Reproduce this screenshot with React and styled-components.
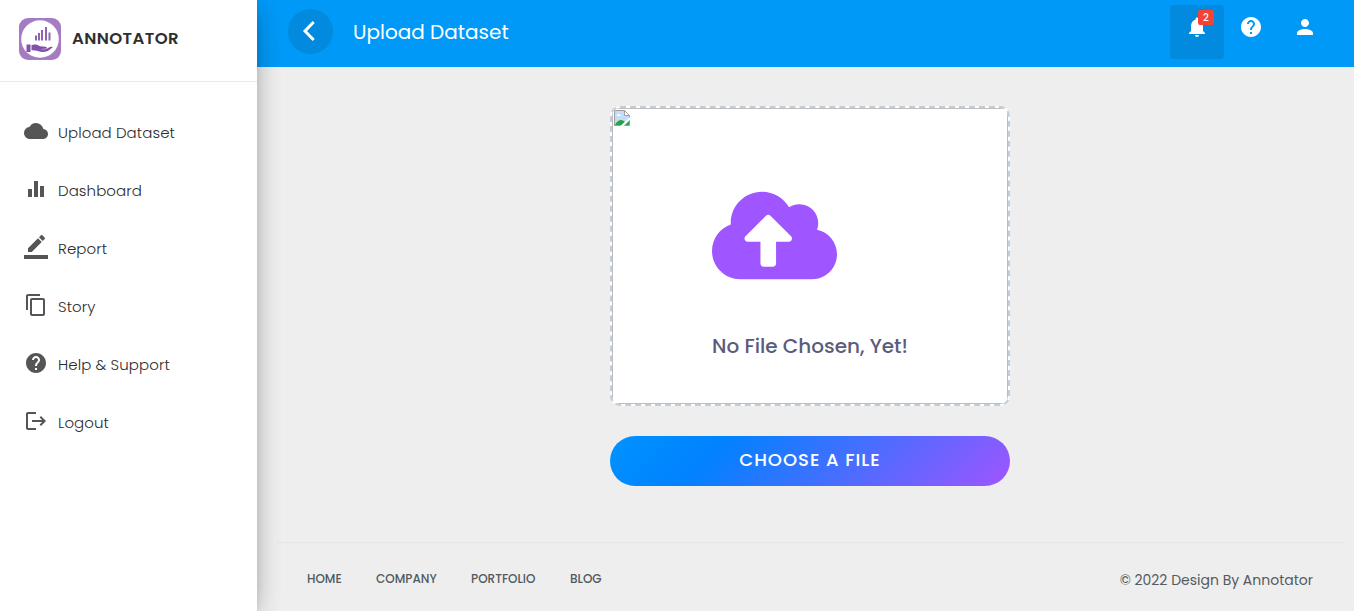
import React from "react";
import styled, { createGlobalStyle } from "styled-components";
import {
  MdCloud,
  MdEqualizer,
  MdContentCopy,
  MdHelp,
  MdLogout,
  MdNotifications,
  MdPerson,
} from "react-icons/md";

const GlobalStyle = createGlobalStyle`
  *, *::before, *::after { box-sizing: border-box; }
  body {
    margin: 0;
    overflow: hidden;
    background: #eee;
    color: #3c4858;
    font-family: Poppins, "Open Sans", "Noto Sans", sans-serif;
  }
  a { color: inherit; text-decoration: none; }
  button { border: 0; padding: 0; font: inherit; color: inherit; cursor: pointer; }
  svg { display: block; flex: none; }
`;

const Page = styled.div`
  display: grid;
  grid-template-columns: 257px 1fr;
  height: 100vh;
  min-height: 611px;
`;

const Sidebar = styled.aside`
  z-index: 2;
  display: flex;
  flex-direction: column;
  background: #fff;
  box-shadow: 0 10px 30px -12px rgba(0, 0, 0, 0.42), 0 4px 25px 0 rgba(0, 0, 0, 0.12),
    0 8px 10px -5px rgba(0, 0, 0, 0.2);
`;

const Brand = styled.a`
  display: flex;
  align-items: center;
  height: 82px;
  padding: 0 0 4px 18px;
  gap: 10px;
  border-bottom: 1px solid #e9e9e9;
`;

const BrandName = styled.span`
  color: #2e2e2e;
  font-size: 16.5px;
  font-weight: 600;
  line-height: 24px;
  letter-spacing: 0.4px;
`;

const Menu = styled.nav`
  display: flex;
  flex-direction: column;
  padding: 20px 0 0 24px;
`;

const MenuItem = styled.a`
  display: flex;
  align-items: center;
  gap: 10px;
  height: 58px;
  color: #555;
`;

const MenuLabel = styled.span`
  padding-top: 3px;
  color: #2c2c2c;
  font-size: 15px;
  font-weight: 300;
  line-height: 24px;
  white-space: nowrap;
  letter-spacing: 0.07px;
`;

const Main = styled.div`
  display: flex;
  flex-direction: column;
  min-width: 0;
`;

const TopBar = styled.header`
  display: flex;
  align-items: flex-start;
  height: 67px;
  padding: 5px 22px 0 31px;
  background: #0099f7;
  color: #fff;
`;

const BackButton = styled.button`
  display: flex;
  align-items: center;
  justify-content: center;
  width: 45px;
  height: 45px;
  margin-top: 4px;
  padding: 0 3px 1px 0;
  border-radius: 50%;
  background: #018ade;
`;

const Title = styled.h1`
  margin: 12px auto 0 20px;
  font-size: 20px;
  font-weight: 400;
  line-height: 30px;
`;

const ToolButton = styled.button`
  position: relative;
  display: flex;
  justify-content: center;
  width: 54px;
  height: 54px;
  padding-top: 10px;
  border-radius: 4px;
  background: ${(p) => (p.$active ? "#018ade" : "transparent")};
`;

const Badge = styled.span`
  position: absolute;
  top: 5px;
  right: 10px;
  width: 16px;
  height: 15px;
  border-radius: 2px;
  background: #f44336;
  font-size: 10px;
  font-weight: 500;
  line-height: 15px;
  text-align: center;
`;

const Content = styled.main`
  display: flex;
  flex-direction: column;
  align-items: center;
  flex: 1;
  gap: 30px;
  padding: 39px 0 0 9px;
`;

const DropZone = styled.section`
  width: 400px;
  height: 300px;
  border: 2px dashed #c2cdda;
  border-radius: 10px;
  background: #fff;
  overflow: hidden;
`;

const Preview = styled.div`
  display: flex;
  align-items: flex-start;
  height: 100%;
  padding: 1px;
  border: 1px solid #bdbdbd;
`;

const EmptyState = styled.div`
  display: flex;
  flex-direction: column;
  padding: 75px 0 0 82px;
`;

const EmptyText = styled.p`
  margin: 46px 0 0;
  color: #5b5b7b;
  font-size: 20px;
  font-weight: 500;
  line-height: 30px;
  white-space: nowrap;
`;

const ChooseButton = styled.button`
  width: 400px;
  height: 50px;
  padding-bottom: 4px;
  border-radius: 25px;
  background: linear-gradient(135deg, #0093ff 0%, #0082ff 26%, #9f55ff 100%);
  color: #fff;
  font-size: 18px;
  font-weight: 500;
  letter-spacing: 1px;
`;

const Footer = styled.footer`
  display: flex;
  align-items: center;
  justify-content: space-between;
  height: 69px;
  margin: 0 11px 0 20px;
  padding: 5px 30px 0;
  border-top: 1px solid #e5e5e5;
`;

const FooterLinks = styled.nav`
  display: flex;
  gap: 34px;
  padding-bottom: 2px;
  font-size: 12px;
  font-weight: 500;
  line-height: 18px;
  color: #4f5a5e;
`;

const FooterLink = styled.a`
  width: ${(p) => p.$width}px;
  white-space: nowrap;
`;

const Copyright = styled.p`
  margin: 2px 0 0;
  color: #555b60;
  font-size: 14px;
  line-height: 21px;
  white-space: nowrap;
`;

const ReportIcon = () => (
  <svg width="24" height="24" viewBox="0 0 24 24" fill="currentColor">
    <path d="M17.75 7L14 3.25l-10 10V17h3.75l10-10zm2.96-2.96c.39-.39.39-1.02 0-1.41L18.37.29c-.39-.39-1.02-.39-1.41 0L15 2.25 18.75 6l1.96-1.96z" />
    <path d="M0 20h24v4H0z" />
  </svg>
);

const ChevronIcon = () => (
  <svg width="24" height="24" viewBox="0 0 24 24" fill="none">
    <path
      d="M16.700 3L8 12l8.700 9"
      stroke="currentColor"
      strokeWidth="3"
      strokeLinejoin="miter"
    />
  </svg>
);

const CloudUploadIcon = () => (
  <svg width="125" height="100" viewBox="0 -2 640 512" fill="#9f55ff">
    <path d="M537.6 226.6c4.1-10.7 6.4-22.4 6.4-34.6 0-53-43-96-96-96-19.7 0-38.1 6-53.3 16.2C367 64.2 315.3 32 256 32c-88.4 0-160 71.6-160 160 0 2.7.1 5.4.2 8.1C40.2 219.8 0 273.2 0 336c0 79.5 64.5 144 144 144h368c70.7 0 128-57.3 128-128 0-61.9-44-113.6-102.4-125.4zM393.4 288H328v112c0 8.8-7.2 16-16 16h-48c-8.8 0-16-7.2-16-16V288h-65.4c-14.3 0-21.4-17.2-11.3-27.3l105.4-105.4c6.2-6.2 16.4-6.2 22.6 0l105.4 105.4c10.1 10.1 2.9 27.3-11.3 27.3z" />
  </svg>
);

const Logo = () => (
  <svg width="44" height="44" viewBox="0 0 44 44">
    <rect x="1" y="1" width="42" height="42" rx="9" fill="#a57bc1" />
    <circle cx="22" cy="22" r="18.800" fill="#fff" />
    <g fill="#8f63b5">
      <path d="M17 18.500h2v5h-2zM20 16h2v7.500h-2zM23 13h2v10.500h-2zM27 10h2v13.500h-2zM30.500 15.500h2v8h-2z" />
    </g>
    <g fill="#8350ab">
      <path d="M8.500 27.500h4v7.500h-4zM13.500 28c3.500-1 6-.500 8.500 1.300l5.500.400c2 .200 1.500 1.800 0 2l-5 .200c3 1 5.500.300 8-1.200 1.500-.900 3-1.200 4.500-.700-2.500 2-5.500 5.200-10 5-4 0-7-2-11.500-1.700z" />
    </g>
  </svg>
);

const BrokenImageIcon = () => (
  <svg width="16" height="16" viewBox="0 0 16 16">
    <path d="M.5.5h10l5 5v10H.5z" fill="#c6dbf8" stroke="#a0a0a0" />
    <path d="M10.500.500v5h5z" fill="#fff" stroke="#a0a0a0" />
    <path d="M3 5.500c0-1.500 2-2 2.500-.700C7 4.500 7.500 6 6.500 6H3z" fill="#fff" />
    <path d="M1 15c1-3 4-5 6-5s3 1 4 2l-3 3z" fill="#22a544" />
    <path d="M16 7v2.500L9.500 16H6.500z" fill="#fff" />
    <path d="M11 15l4-4v4z" fill="#22a544" />
  </svg>
);

const menu = [
  { label: "Upload Dataset", Icon: MdCloud },
  { label: "Dashboard", Icon: MdEqualizer },
  { label: "Report", Icon: ReportIcon },
  { label: "Story", Icon: MdContentCopy },
  { label: "Help & Support", Icon: MdHelp },
  { label: "Logout", Icon: MdLogout },
];

const links = [
  { label: "HOME", width: 35 },
  { label: "COMPANY", width: 61 },
  { label: "PORTFOLIO", width: 65 },
  { label: "BLOG", width: 32 },
];

export default function App() {
  return (
    <>
      <GlobalStyle />
      <Page>
        <Sidebar>
          <Brand href="#">
            <Logo />
            <BrandName>ANNOTATOR</BrandName>
          </Brand>
          <Menu>
            {menu.map(({ label, Icon }) => (
              <MenuItem href="#" key={label}>
                <Icon size={24} />
                <MenuLabel>{label}</MenuLabel>
              </MenuItem>
            ))}
          </Menu>
        </Sidebar>
        <Main>
          <TopBar>
            <BackButton aria-label="Back">
              <ChevronIcon />
            </BackButton>
            <Title>Upload Dataset</Title>
            <ToolButton $active aria-label="Notifications">
              <MdNotifications size={24} />
              <Badge>2</Badge>
            </ToolButton>
            <ToolButton aria-label="Help">
              <MdHelp size={24} />
            </ToolButton>
            <ToolButton aria-label="Profile">
              <MdPerson size={24} />
            </ToolButton>
          </TopBar>
          <Content>
            <DropZone>
              <Preview>
                <BrokenImageIcon />
                <EmptyState>
                  <CloudUploadIcon />
                  <EmptyText>No File Chosen, Yet!</EmptyText>
                </EmptyState>
              </Preview>
            </DropZone>
            <ChooseButton>CHOOSE A FILE</ChooseButton>
          </Content>
          <Footer>
            <FooterLinks>
              {links.map(({ label, width }) => (
                <FooterLink href="#" key={label} $width={width}>
                  {label}
                </FooterLink>
              ))}
            </FooterLinks>
            <Copyright>© 2022 Design By Annotator</Copyright>
          </Footer>
        </Main>
      </Page>
    </>
  );
}
